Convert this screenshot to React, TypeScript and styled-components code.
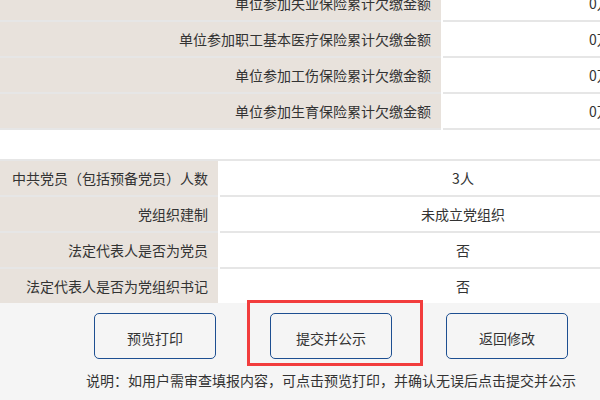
import React from 'react';
import styled, { createGlobalStyle } from 'styled-components';

const GlobalStyle = createGlobalStyle`
  html, body {
    margin: 0;
    padding: 0;
    background: #ffffff;
    overflow: hidden;
  }
  body {
    font-family: "Microsoft YaHei", "Noto Sans CJK SC", "Noto Sans", sans-serif;
    font-size: 14px;
    color: #333333;
  }
`;

const Page = styled.div`
  width: 706px;
`;

const InfoTable = styled.div<{ $labelWidth: number; $offset?: number }>`
  display: grid;
  grid-template-columns: ${(p) => p.$labelWidth}px 1fr;
  column-gap: 2px;
  margin-top: ${(p) => p.$offset ?? 0}px;
`;

const FirstTable = styled(InfoTable)`
  margin-bottom: 29px;
`;

const PartyTable = styled(InfoTable)`
  border-top: 2px solid #e6e6e6;
`;

const LabelCell = styled.div<{ $last?: boolean }>`
  height: 34px;
  line-height: 34px;
  background: #e8e2dc;
  text-align: right;
  padding-right: 10px;
  white-space: nowrap;
  border-bottom: ${(p) => (p.$last ? 'none' : '2px solid #e6e6e6')};
`;

const ValueCell = styled.div<{ $align: 'center' | 'left'; $indent?: number; $last?: boolean }>`
  height: 34px;
  line-height: 34px;
  background: #ffffff;
  text-align: ${(p) => p.$align};
  padding-left: ${(p) => p.$indent ?? 0}px;
  white-space: nowrap;
  overflow: hidden;
  border-bottom: ${(p) => (p.$last ? 'none' : '2px solid #e6e6e6')};
`;

const ActionArea = styled.div`
  background: #f5f5f5;
  height: 120px;
  padding-top: 10px;
`;

const ActionInner = styled.div`
  width: 662px;
  display: flex;
  flex-direction: column;
  align-items: center;
`;

const ButtonRow = styled.div`
  display: flex;
  gap: 54px;
`;

const ButtonSlot = styled.div`
  position: relative;
`;

const ActionButton = styled.button`
  width: 122px;
  height: 46px;
  box-sizing: border-box;
  border: 1px solid #1d4f91;
  border-radius: 5px;
  background: transparent;
  font-family: inherit;
  font-size: 14px;
  color: #333333;
  padding-top: 4px;
  cursor: pointer;
`;

const Highlight = styled.div`
  position: absolute;
  left: -23px;
  top: -13px;
  right: -31px;
  bottom: -7px;
  border: 3px solid #f23d3d;
  pointer-events: none;
`;

const Note = styled.div`
  margin-top: 11px;
  line-height: 20px;
  white-space: nowrap;
`;

const arrears = [
  '单位参加失业保险累计欠缴金额',
  '单位参加职工基本医疗保险累计欠缴金额',
  '单位参加工伤保险累计欠缴金额',
  '单位参加生育保险累计欠缴金额',
];

const party = [
  { label: '中共党员（包括预备党员）人数', value: '3人' },
  { label: '党组织建制', value: '未成立党组织' },
  { label: '法定代表人是否为党员', value: '否' },
  { label: '法定代表人是否为党组织书记', value: '否' },
];

const App: React.FC = () => {
  return (
    <Page>
      <GlobalStyle />
      <FirstTable $labelWidth={441} $offset={-14}>
        {arrears.map((label) => (
          <React.Fragment key={label}>
            <LabelCell>{label}</LabelCell>
            <ValueCell $align="left" $indent={146}>0万元</ValueCell>
          </React.Fragment>
        ))}
      </FirstTable>

      <PartyTable $labelWidth={218}>
        {party.map((row, i) => (
          <React.Fragment key={row.label}>
            <LabelCell $last={i === party.length - 1}>{row.label}</LabelCell>
            <ValueCell $align="center" $last={i === party.length - 1}>
              {row.value}
            </ValueCell>
          </React.Fragment>
        ))}
      </PartyTable>

      <ActionArea>
        <ActionInner>
          <ButtonRow>
            <ButtonSlot>
              <ActionButton>预览打印</ActionButton>
            </ButtonSlot>
            <ButtonSlot>
              <ActionButton>提交并公示</ActionButton>
              <Highlight />
            </ButtonSlot>
            <ButtonSlot>
              <ActionButton>返回修改</ActionButton>
            </ButtonSlot>
          </ButtonRow>
          <Note>说明：如用户需审查填报内容，可点击预览打印，并确认无误后点击提交并公示</Note>
        </ActionInner>
      </ActionArea>
    </Page>
  );
};

export default App;
